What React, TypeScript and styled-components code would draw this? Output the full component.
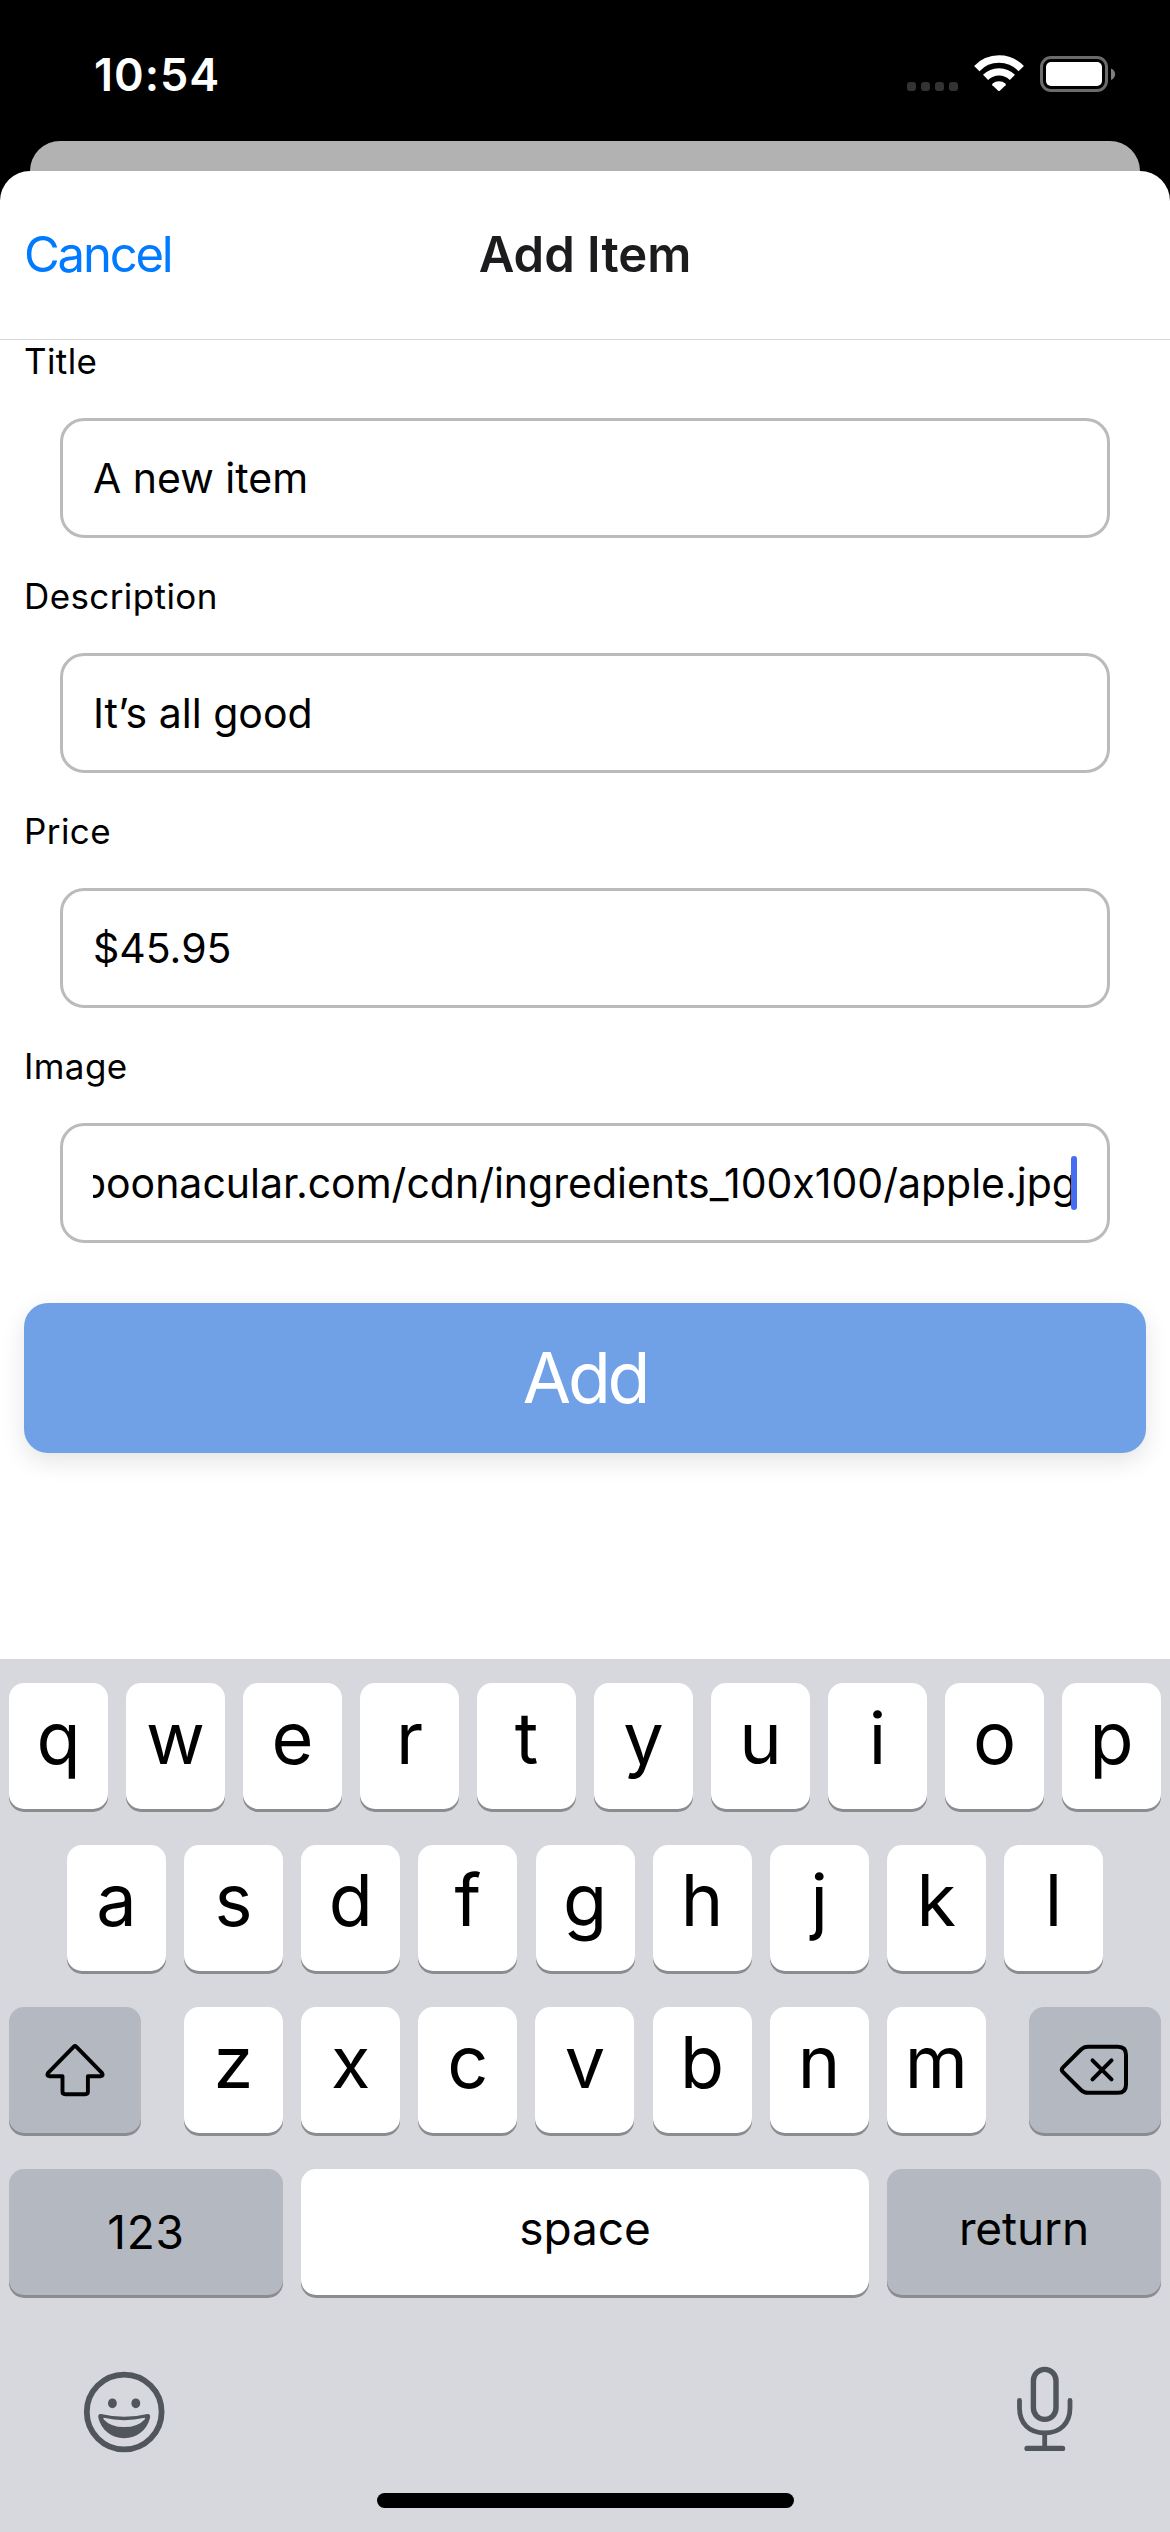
import React from "react";
import styled, { createGlobalStyle } from "styled-components";

const GlobalStyle = createGlobalStyle`
  *, *::before, *::after { box-sizing: border-box; }
  html, body { margin: 0; padding: 0; background: #000; }
  body { font-family: Inter, "Liberation Sans", sans-serif; font-feature-settings: "calt" 0; }
`;

const Screen = styled.div`
  width: 1170px;
  height: 2532px;
  display: flex;
  flex-direction: column;
  background: #000;
  overflow: hidden;
`;

const StatusBar = styled.div`
  height: 141px;
  flex: none;
  display: flex;
  justify-content: space-between;
  padding: 46px 54px 0 94px;
`;

const Time = styled.div`
  height: 57px;
  line-height: 57px;
  font-size: 45px;
  font-weight: 600;
  letter-spacing: 1px;
  color: #fff;
`;

const StatusIcons = styled.svg`
  width: 210px;
  height: 50px;
  display: block;
`;

const BackCard = styled.div`
  flex: none;
  height: 30px;
  margin: 0 30px;
  background: #b2b2b2;
  border-radius: 30px 30px 0 0;
`;

const Sheet = styled.main`
  flex: 1;
  display: flex;
  flex-direction: column;
  background: #fff;
  border-radius: 30px 30px 0 0;
`;

const Header = styled.header`
  flex: none;
  height: 169px;
  display: grid;
  grid-template-columns: 1fr auto 1fr;
  align-items: center;
  padding: 0 24px;
  border-bottom: 1px solid #d8d8d8;
`;

const Cancel = styled.button`
  justify-self: start;
  padding: 0;
  border: 0;
  background: none;
  font-family: inherit;
  font-size: 49px;
  line-height: 60px;
  letter-spacing: -2.2px;
  color: #007aff;
`;

const Heading = styled.h1`
  margin: 0;
  font-size: 49px;
  line-height: 60px;
  font-weight: 600;
  letter-spacing: 0;
  color: #1c1c1e;
`;

const Form = styled.div`
  flex: 1;
  display: flex;
  flex-direction: column;
  padding: 0 24px;
`;

const Field = styled.div`
  display: flex;
  flex-direction: column;
  gap: 36px;
  padding-bottom: 37px;
`;

const Label = styled.label`
  font-size: 35px;
  line-height: 42px;
  letter-spacing: 0.4px;
  color: #000;
`;

const InputBox = styled.div`
  position: relative;
  height: 120px;
  margin: 0 36px;
  padding: 0 30px;
  display: flex;
  align-items: center;
  border: 3px solid #bbb;
  border-radius: 24px;
`;

const Value = styled.div<{ $scrolled?: boolean }>`
  flex: 1;
  min-width: 0;
  display: flex;
  justify-content: ${(p) => (p.$scrolled ? "flex-end" : "flex-start")};
  overflow: hidden;
  white-space: nowrap;
  font-size: 41px;
  line-height: 54px;
  letter-spacing: 0px;
  color: #000;
`;

const Caret = styled.span`
  position: absolute;
  right: 30px;
  top: 30px;
  width: 6px;
  height: 54px;
  border-radius: 3px;
  background: #446df2;
`;

const AddButton = styled.button`
  height: 150px;
  margin-top: 23px;
  padding: 0;
  border: 0;
  border-radius: 24px;
  background: #70a1e7;
  box-shadow: 0 8px 24px rgba(0, 0, 0, 0.11);
  font-family: inherit;
  font-size: 70px;
  line-height: 86px;
  font-weight: 400;
  letter-spacing: -3.2px;
  color: #fff;
`;

const Keyboard = styled.section`
  flex: none;
  height: 873px;
  display: flex;
  flex-direction: column;
  gap: 36px;
  padding-top: 24px;
  background: #d7d8dd;
`;

const KeyRow = styled.div<{ $gap?: number; $inset?: number }>`
  display: flex;
  gap: ${(p) => p.$gap ?? 18}px;
  padding: 0 ${(p) => p.$inset ?? 9}px;
`;

const LetterGroup = styled.div`
  display: flex;
  gap: 18.14px;
  margin: 0 43px;
`;

const Key = styled.div<{ $width?: number; $dark?: boolean }>`
  flex: none;
  width: ${(p) => p.$width ?? 99}px;
  height: 126px;
  display: flex;
  align-items: center;
  justify-content: center;
  border-radius: 15px;
  background: ${(p) => (p.$dark ? "#b3b8c1" : "#fff")};
  box-shadow: 0 3px 0 #8b8c90;
  color: #000;
`;

const Letter = styled.span`
  padding-bottom: 16px;
  font-size: 72px;
  line-height: 88px;
  font-weight: 370;
`;

const KeyLabel = styled.span<{ $raise?: number; $spacing?: number }>`
  padding-bottom: ${(p) => p.$raise ?? 0}px;
  font-size: 46px;
  line-height: 58px;
  letter-spacing: ${(p) => p.$spacing ?? -0.1}px;
`;

const BottomTools = styled.div`
  height: 162px;
  display: flex;
  justify-content: space-between;
  padding: 33px 94px 0 80px;
`;

const ToolIcon = styled.svg`
  display: block;
  overflow: visible;
`;

const HomeBar = styled.div`
  flex: none;
  align-self: center;
  width: 417px;
  height: 15px;
  margin-top: -36px;
  border-radius: 8px;
  background: #000;
`;

const ink = "#50565b";

const ShiftIcon = () => (
  <ToolIcon width="60" height="54" viewBox="45.5 2043 60 54" fill="none" stroke="#000" strokeWidth="3.9" strokeLinejoin="round">
    <path d="M74.3 2046.6 L48.6 2072.8 Q46.6 2076.2 50 2076.2 H63 V2091.5 Q63 2094.2 65.7 2094.2 H85.7 Q88.4 2094.2 88.4 2091.5 V2076.2 H101 Q104.4 2076.2 102.4 2072.8 L76.7 2046.6 Q75.5 2045.4 74.3 2046.6 Z" />
  </ToolIcon>
);

const DeleteIcon = () => (
  <ToolIcon width="70" height="54" viewBox="1060 2043 70 54" fill="none" stroke="#000" strokeWidth="4" strokeLinejoin="round" strokeLinecap="round">
    <path d="M1088 2046.7 H1118 Q1126 2046.7 1126 2054.7 V2084.8 Q1126 2092.8 1118 2092.8 H1088 Q1084 2092.8 1081 2090 L1062.8 2071.8 Q1060.8 2069.8 1062.8 2067.7 L1081 2049.5 Q1084 2046.7 1088 2046.7 Z" />
    <path d="M1092.5 2060.3 L1111.5 2079.3 M1111.5 2060.3 L1092.5 2079.3" />
  </ToolIcon>
);

const EmojiIcon = () => (
  <ToolIcon width="88" height="92" viewBox="80 2364 88 92">
    <circle cx="124.2" cy="2412" r="37.4" fill="none" stroke={ink} strokeWidth="5.8" />
    <ellipse cx="112.4" cy="2403.3" rx="4.4" ry="4.9" fill={ink} />
    <ellipse cx="135.8" cy="2403.3" rx="4.4" ry="4.9" fill={ink} />
    <path
      fill={ink}
      fillRule="evenodd"
      d="M101 2414 Q124.2 2419.6 147.4 2414 Q150.8 2413.6 150 2418 C147 2430 137 2438.2 124.2 2438.2 C111.4 2438.2 101.4 2430 98.4 2418 Q97.6 2413.6 101 2414 Z M103.8 2417.8 Q102.8 2417.8 103.8 2419.4 Q110.6 2427 124.2 2427 Q137.8 2427 144.6 2419.4 Q145.6 2417.8 144.6 2417.8 Q124.2 2422.6 103.8 2417.8 Z"
    />
  </ToolIcon>
);

const MicIcon = () => (
  <ToolIcon width="60" height="88" viewBox="1016 2364 60 88" fill="none" stroke={ink} strokeLinecap="round">
    <rect x="1033.4" y="2369.4" width="22.6" height="50" rx="11.3" strokeWidth="5.4" />
    <path strokeWidth="4.8" d="M1019.5 2400.5 V2408 C1019.5 2423 1029 2433 1044.7 2433 C1060.4 2433 1070 2423 1070 2408 V2400.5 M1044.7 2434 V2447" />
    <path strokeWidth="5.2" d="M1027 2448.4 H1062.6" />
  </ToolIcon>
);

const StatusGlyphs = () => (
  <StatusIcons viewBox="906 46 210 50" fill="none">
    {[907, 921, 935, 949].map((x) => (
      <rect key={x} x={x} y="82" width="9" height="9" rx="3" fill="#333" />
    ))}
    <path d="M976.8 68.6 A30.6 30.6 0 0 1 1021.2 68.6" stroke="#fff" strokeWidth="7.4" />
    <path d="M985.6 77.4 A18.8 18.8 0 0 1 1012.4 77.4" stroke="#fff" strokeWidth="7.2" />
    <path d="M992.4 85.2 Q991.8 84.4 992.6 83.6 A9.6 9.6 0 0 1 1005.4 83.6 Q1006.2 84.4 1005.6 85.2 L999.8 90.7 Q999 91.4 998.2 90.7 Z" fill="#fff" />
    <rect x="1041.5" y="57.5" width="65" height="33" rx="9.5" stroke="#6b6b6b" strokeWidth="3" />
    <rect x="1046" y="62" width="56" height="24" rx="5" fill="#fff" />
    <path d="M1111 68.5 C1116.5 70.8 1116.5 77.7 1111 80 Z" fill="#7f7f7f" />
  </StatusIcons>
);

const fields = [
  { label: "Title", value: "A new item" },
  { label: "Description", value: "It’s all good" },
  { label: "Price", value: "$45.95" },
  { label: "Image", value: "https://spoonacular.com/cdn/ingredients_100x100/apple.jpg", focused: true },
];

const letters = (row: string) =>
  row.split("").map((c) => (
    <Key key={c}>
      <Letter>{c}</Letter>
    </Key>
  ));

export default function App() {
  return (
    <Screen>
      <GlobalStyle />
      <StatusBar>
        <Time>10:54</Time>
        <StatusGlyphs />
      </StatusBar>
      <BackCard />
      <Sheet>
        <Header>
          <Cancel>Cancel</Cancel>
          <Heading>Add Item</Heading>
        </Header>
        <Form>
          {fields.map((f) => (
            <Field key={f.label}>
              <Label>{f.label}</Label>
              <InputBox>
                <Value $scrolled={f.focused}>
                  <span>{f.value}</span>
                </Value>
                {f.focused && <Caret />}
              </InputBox>
            </Field>
          ))}
          <AddButton>Add</AddButton>
        </Form>
      </Sheet>
      <Keyboard>
        <KeyRow>{letters("qwertyuiop")}</KeyRow>
        <KeyRow $gap={18.14} $inset={67}>{letters("asdfghjkl")}</KeyRow>
        <KeyRow $gap={0}>
          <Key $dark $width={132}>
            <ShiftIcon />
          </Key>
          <LetterGroup>{letters("zxcvbnm")}</LetterGroup>
          <Key $dark $width={132}>
            <DeleteIcon />
          </Key>
        </KeyRow>
        <KeyRow>
          <Key $dark $width={274}>
            <KeyLabel $spacing={0.8}>123</KeyLabel>
          </Key>
          <Key $width={568}>
            <KeyLabel $raise={8}>space</KeyLabel>
          </Key>
          <Key $dark $width={274}>
            <KeyLabel $raise={8}>return</KeyLabel>
          </Key>
        </KeyRow>
        <BottomTools>
          <EmojiIcon />
          <MicIcon />
        </BottomTools>
        <HomeBar />
      </Keyboard>
    </Screen>
  );
}
